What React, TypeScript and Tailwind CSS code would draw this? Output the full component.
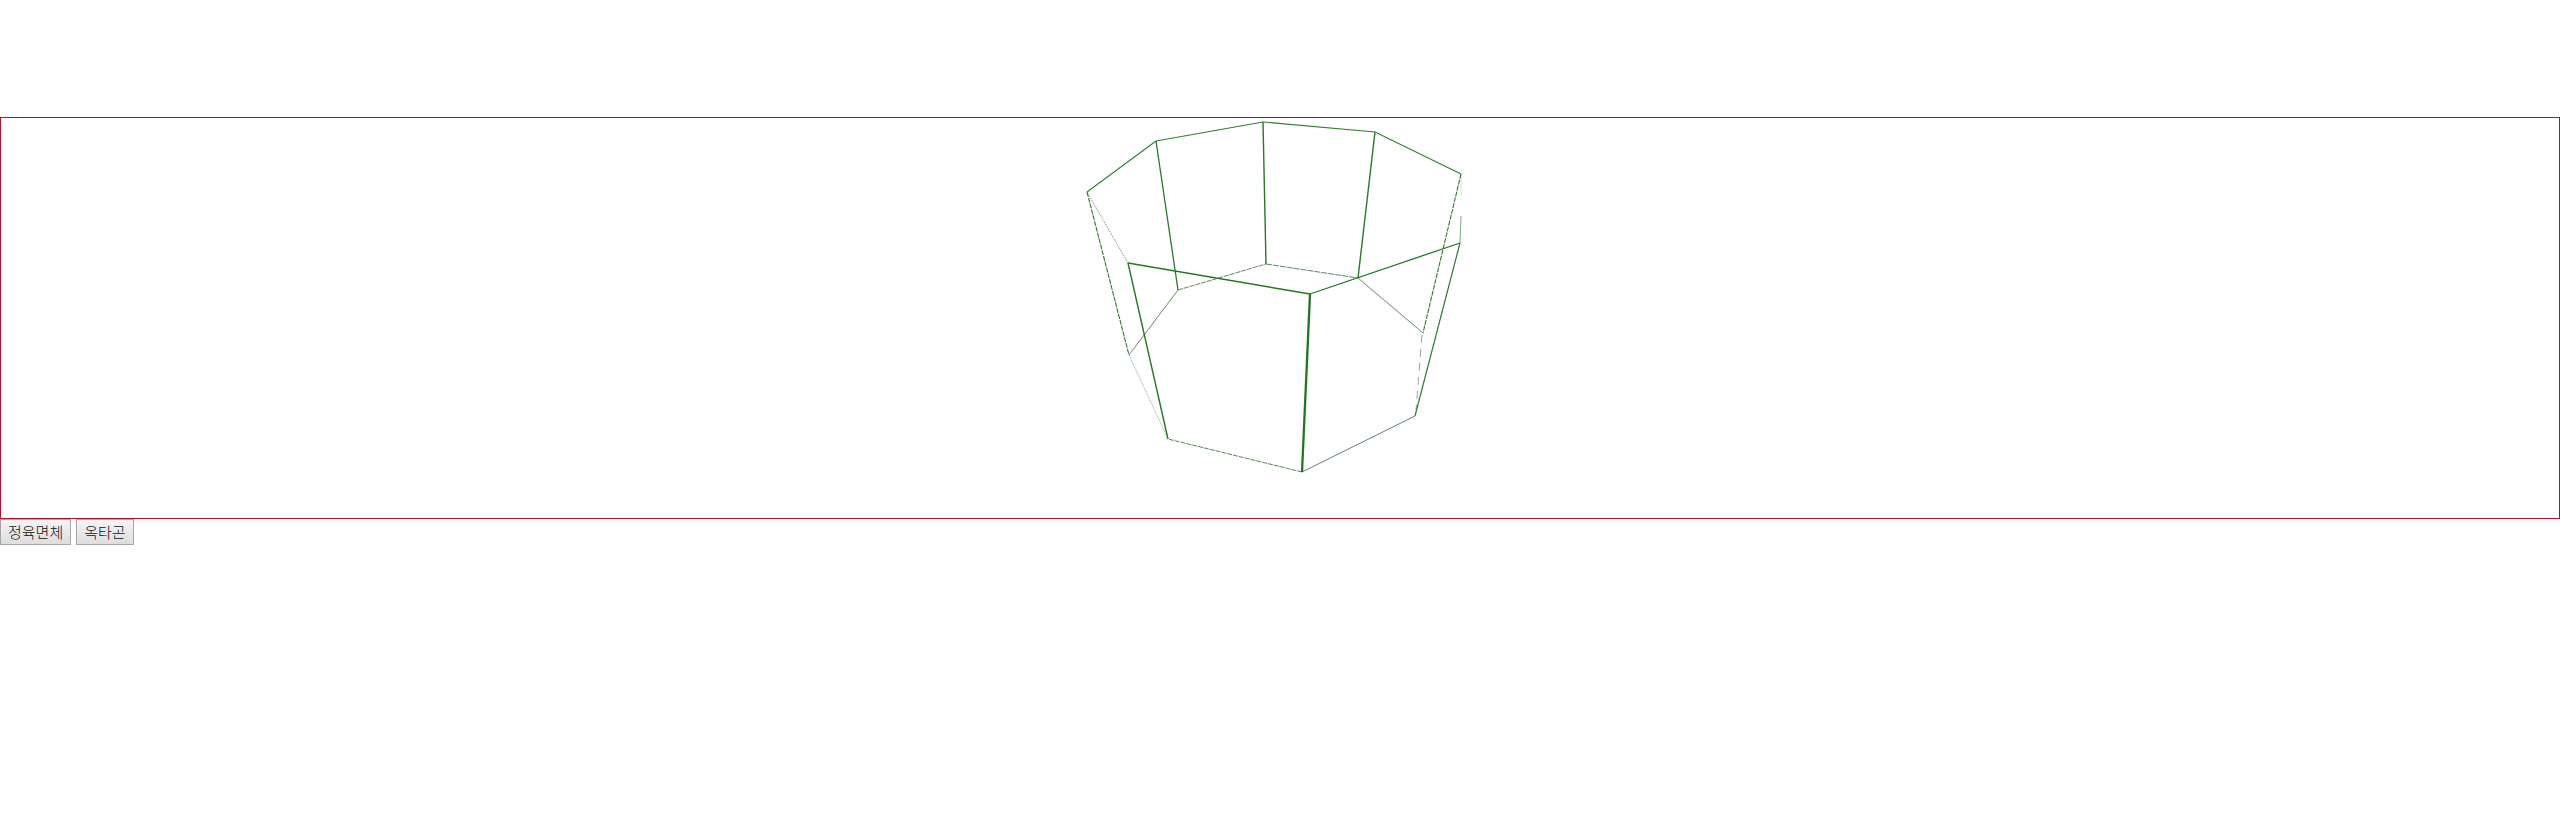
type Edge = { from: [number, number]; to: [number, number]; color: string; width: number; dash?: string };

// Coordinates are relative to the drawing's own view box.
const edges: Edge[] = [
  // upper ring
  { from: [7, 74], to: [76, 23], color: '#2f7d30', width: 1.1 },
  { from: [76, 23], to: [183, 4], color: '#2f7d30', width: 1.1 },
  { from: [183, 4], to: [295, 14], color: '#2f7d30', width: 1.1 },
  { from: [295, 14], to: [381, 56], color: '#2f7d30', width: 1.1 },
  { from: [381, 56], to: [381, 78], color: '#d3e0d3', width: 1 },
  { from: [381, 98], to: [380, 125], color: '#7fa97f', width: 1 },
  { from: [380, 125], to: [230, 176], color: '#237823', width: 1.3 },
  { from: [230, 176], to: [48, 145], color: '#237823', width: 1.4 },
  { from: [48, 145], to: [7, 74], color: '#557855', width: 0.9, dash: '1 1' },
  // lower ring
  { from: [49, 237], to: [98, 172], color: '#587f58', width: 0.9 },
  { from: [98, 172], to: [186, 146], color: '#487a48', width: 0.9, dash: '5 1' },
  { from: [186, 146], to: [278, 160], color: '#487a48', width: 0.9, dash: '6 1' },
  { from: [278, 160], to: [343, 215], color: '#587f58', width: 0.9 },
  { from: [342, 217], to: [336, 292], color: '#86a086', width: 0.9, dash: '8 6' },
  { from: [335, 298], to: [222, 354], color: '#4d7c4d', width: 0.9 },
  { from: [222, 354], to: [88, 321], color: '#407a40', width: 0.9, dash: '5 1' },
  { from: [88, 321], to: [49, 237], color: '#7d947d', width: 0.9, dash: '1 1' },
  // sides
  { from: [7, 74], to: [49, 237], color: '#2f7a2f', width: 1.1, dash: '5 1' },
  { from: [76, 23], to: [98, 172], color: '#277927', width: 1.3 },
  { from: [183, 4], to: [186, 146], color: '#277927', width: 1.4 },
  { from: [295, 14], to: [278, 160], color: '#277927', width: 1.4 },
  { from: [381, 56], to: [343, 215], color: '#2f7a2f', width: 1.1, dash: '5 1' },
  { from: [380, 125], to: [335, 298], color: '#2f7a2f', width: 1.2 },
  { from: [230, 176], to: [222, 354], color: '#1f781f', width: 2.3 },
  { from: [48, 145], to: [88, 321], color: '#237723', width: 1.4 },
];

function Prism() {
  return (
    <svg viewBox="0 0 400 400" className="h-[400px] w-[400px]" fill="none" aria-hidden="true">
      {edges.map(({ from, to, color, width, dash }, i) => (
        <line
          key={i}
          x1={from[0]}
          y1={from[1]}
          x2={to[0]}
          y2={to[1]}
          stroke={color}
          strokeWidth={width}
          strokeDasharray={dash}
        />
      ))}
    </svg>
  );
}

const buttonClass =
  'h-[26px] border border-[#a6a6a6] bg-linear-to-b from-[#f5f5f5] to-[#dddddd] px-[7px] text-[15px] leading-[20px] font-light text-[#111111]';

export default function App() {
  return (
    <main className="min-h-screen bg-white pt-[117px] font-['Noto_Sans_CJK_KR',sans-serif]">
      <section className="flex justify-center border border-[#aa1428]">
        <Prism />
      </section>
      <div className="flex gap-[5px]">
        <button type="button" className={buttonClass}>정육면체</button>
        <button type="button" className={buttonClass}>옥타곤</button>
      </div>
    </main>
  );
}
